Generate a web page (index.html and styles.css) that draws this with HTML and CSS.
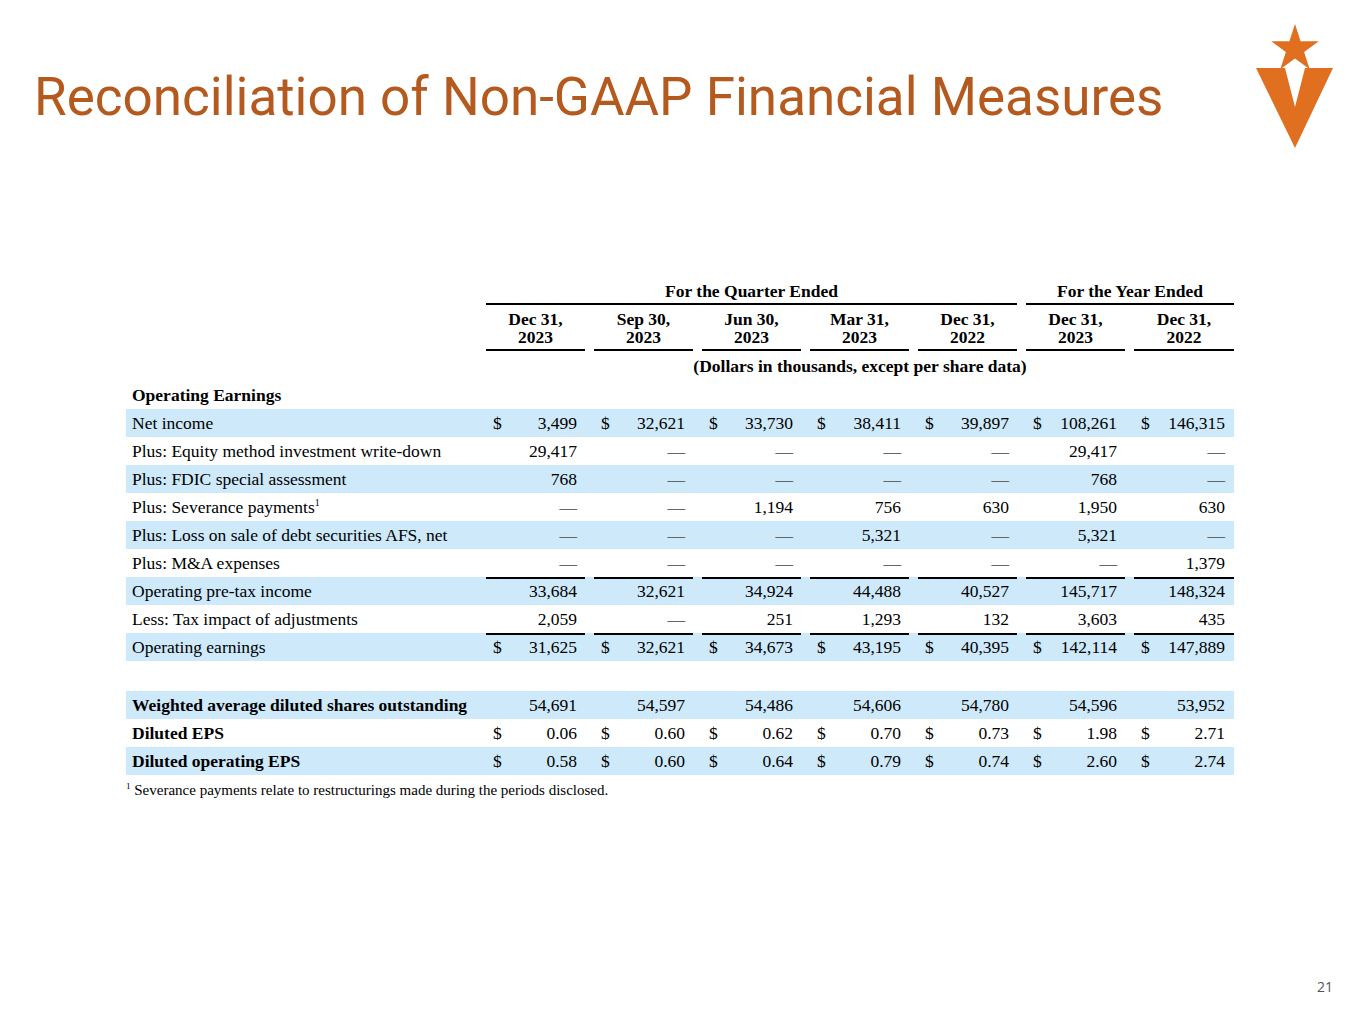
FILE: index.html
```html
<!DOCTYPE html>
<html lang="en">
<head>
<meta charset="utf-8">
<title>Reconciliation of Non-GAAP Financial Measures</title>
<link rel="stylesheet" href="styles.css">
</head>
<body>
<div class="page">
  <header class="header">
    <h1 class="title">Reconciliation of Non-GAAP Financial Measures</h1>
    <svg class="logo" width="80" height="128" viewBox="1257 21 80 128" aria-hidden="true">
      <polygon fill="#E0701F" points="1297,24 1302.6,41.3 1320.8,41.3 1306.1,52 1311.7,69.2 1297,58.5 1282.3,69.2 1287.9,52 1273.2,41.3 1291.4,41.3"/>
      <polygon fill="#E0701F" points="1258,68 1287,68 1297,107 1307,68 1335,68 1297,148"/>
    </svg>
  </header>

  <section class="table">
    <div class="row hdr-group">
      <div class="label"></div>
      <div class="span-q"><div class="in ul">For the Quarter Ended</div></div>
      <div class="span-y"><div class="in ul last">For the Year Ended</div></div>
    </div>
    <div class="row hdr-cols">
      <div class="label"></div>
      <div class="c"><div class="in ul">Dec 31,<br>2023</div></div>
      <div class="c"><div class="in ul">Sep 30,<br>2023</div></div>
      <div class="c"><div class="in ul">Jun 30,<br>2023</div></div>
      <div class="c"><div class="in ul">Mar 31,<br>2023</div></div>
      <div class="c"><div class="in ul">Dec 31,<br>2022</div></div>
      <div class="c"><div class="in ul">Dec 31,<br>2023</div></div>
      <div class="c"><div class="in ul last">Dec 31,<br>2022</div></div>
    </div>
    <div class="row hdr-units">
      <div class="label"></div>
      <div class="span-all">(Dollars in thousands, except per share data)</div>
    </div>
    <div class="row">
      <div class="label bold">Operating Earnings</div>
    </div>

    <div class="row band">
      <div class="label">Net income</div>
      <div class="c"><div class="in"><span>$</span><span>3,499</span></div></div>
      <div class="c"><div class="in"><span>$</span><span>32,621</span></div></div>
      <div class="c"><div class="in"><span>$</span><span>33,730</span></div></div>
      <div class="c"><div class="in"><span>$</span><span>38,411</span></div></div>
      <div class="c"><div class="in"><span>$</span><span>39,897</span></div></div>
      <div class="c"><div class="in"><span>$</span><span>108,261</span></div></div>
      <div class="c"><div class="in last"><span>$</span><span>146,315</span></div></div>
    </div>
    <div class="row">
      <div class="label">Plus: Equity method investment write-down</div>
      <div class="c"><div class="in"><span></span><span>29,417</span></div></div>
      <div class="c"><div class="in"><span></span><span class="dash">—</span></div></div>
      <div class="c"><div class="in"><span></span><span class="dash">—</span></div></div>
      <div class="c"><div class="in"><span></span><span class="dash">—</span></div></div>
      <div class="c"><div class="in"><span></span><span class="dash">—</span></div></div>
      <div class="c"><div class="in"><span></span><span>29,417</span></div></div>
      <div class="c"><div class="in last"><span></span><span class="dash">—</span></div></div>
    </div>
    <div class="row band">
      <div class="label">Plus: FDIC special assessment</div>
      <div class="c"><div class="in"><span></span><span>768</span></div></div>
      <div class="c"><div class="in"><span></span><span class="dash">—</span></div></div>
      <div class="c"><div class="in"><span></span><span class="dash">—</span></div></div>
      <div class="c"><div class="in"><span></span><span class="dash">—</span></div></div>
      <div class="c"><div class="in"><span></span><span class="dash">—</span></div></div>
      <div class="c"><div class="in"><span></span><span>768</span></div></div>
      <div class="c"><div class="in last"><span></span><span class="dash">—</span></div></div>
    </div>
    <div class="row">
      <div class="label">Plus: Severance payments<sup>1</sup></div>
      <div class="c"><div class="in"><span></span><span class="dash">—</span></div></div>
      <div class="c"><div class="in"><span></span><span class="dash">—</span></div></div>
      <div class="c"><div class="in"><span></span><span>1,194</span></div></div>
      <div class="c"><div class="in"><span></span><span>756</span></div></div>
      <div class="c"><div class="in"><span></span><span>630</span></div></div>
      <div class="c"><div class="in"><span></span><span>1,950</span></div></div>
      <div class="c"><div class="in last"><span></span><span>630</span></div></div>
    </div>
    <div class="row band">
      <div class="label">Plus: Loss on sale of debt securities AFS, net</div>
      <div class="c"><div class="in"><span></span><span class="dash">—</span></div></div>
      <div class="c"><div class="in"><span></span><span class="dash">—</span></div></div>
      <div class="c"><div class="in"><span></span><span class="dash">—</span></div></div>
      <div class="c"><div class="in"><span></span><span>5,321</span></div></div>
      <div class="c"><div class="in"><span></span><span class="dash">—</span></div></div>
      <div class="c"><div class="in"><span></span><span>5,321</span></div></div>
      <div class="c"><div class="in last"><span></span><span class="dash">—</span></div></div>
    </div>
    <div class="row">
      <div class="label">Plus: M&amp;A expenses</div>
      <div class="c"><div class="in ul"><span></span><span class="dash">—</span></div></div>
      <div class="c"><div class="in ul"><span></span><span class="dash">—</span></div></div>
      <div class="c"><div class="in ul"><span></span><span class="dash">—</span></div></div>
      <div class="c"><div class="in ul"><span></span><span class="dash">—</span></div></div>
      <div class="c"><div class="in ul"><span></span><span class="dash">—</span></div></div>
      <div class="c"><div class="in ul"><span></span><span class="dash">—</span></div></div>
      <div class="c"><div class="in ul last"><span></span><span>1,379</span></div></div>
    </div>
    <div class="row band">
      <div class="label">Operating pre-tax income</div>
      <div class="c"><div class="in"><span></span><span>33,684</span></div></div>
      <div class="c"><div class="in"><span></span><span>32,621</span></div></div>
      <div class="c"><div class="in"><span></span><span>34,924</span></div></div>
      <div class="c"><div class="in"><span></span><span>44,488</span></div></div>
      <div class="c"><div class="in"><span></span><span>40,527</span></div></div>
      <div class="c"><div class="in"><span></span><span>145,717</span></div></div>
      <div class="c"><div class="in last"><span></span><span>148,324</span></div></div>
    </div>
    <div class="row">
      <div class="label">Less: Tax impact of adjustments</div>
      <div class="c"><div class="in ul"><span></span><span>2,059</span></div></div>
      <div class="c"><div class="in ul"><span></span><span class="dash">—</span></div></div>
      <div class="c"><div class="in ul"><span></span><span>251</span></div></div>
      <div class="c"><div class="in ul"><span></span><span>1,293</span></div></div>
      <div class="c"><div class="in ul"><span></span><span>132</span></div></div>
      <div class="c"><div class="in ul"><span></span><span>3,603</span></div></div>
      <div class="c"><div class="in ul last"><span></span><span>435</span></div></div>
    </div>
    <div class="row band">
      <div class="label">Operating earnings</div>
      <div class="c"><div class="in"><span>$</span><span>31,625</span></div></div>
      <div class="c"><div class="in"><span>$</span><span>32,621</span></div></div>
      <div class="c"><div class="in"><span>$</span><span>34,673</span></div></div>
      <div class="c"><div class="in"><span>$</span><span>43,195</span></div></div>
      <div class="c"><div class="in"><span>$</span><span>40,395</span></div></div>
      <div class="c"><div class="in"><span>$</span><span>142,114</span></div></div>
      <div class="c"><div class="in last"><span>$</span><span>147,889</span></div></div>
    </div>

    <div class="row band gap-before">
      <div class="label bold">Weighted average diluted shares outstanding</div>
      <div class="c"><div class="in"><span></span><span>54,691</span></div></div>
      <div class="c"><div class="in"><span></span><span>54,597</span></div></div>
      <div class="c"><div class="in"><span></span><span>54,486</span></div></div>
      <div class="c"><div class="in"><span></span><span>54,606</span></div></div>
      <div class="c"><div class="in"><span></span><span>54,780</span></div></div>
      <div class="c"><div class="in"><span></span><span>54,596</span></div></div>
      <div class="c"><div class="in last"><span></span><span>53,952</span></div></div>
    </div>
    <div class="row">
      <div class="label bold">Diluted EPS</div>
      <div class="c"><div class="in"><span>$</span><span>0.06</span></div></div>
      <div class="c"><div class="in"><span>$</span><span>0.60</span></div></div>
      <div class="c"><div class="in"><span>$</span><span>0.62</span></div></div>
      <div class="c"><div class="in"><span>$</span><span>0.70</span></div></div>
      <div class="c"><div class="in"><span>$</span><span>0.73</span></div></div>
      <div class="c"><div class="in"><span>$</span><span>1.98</span></div></div>
      <div class="c"><div class="in last"><span>$</span><span>2.71</span></div></div>
    </div>
    <div class="row band">
      <div class="label bold">Diluted operating EPS</div>
      <div class="c"><div class="in"><span>$</span><span>0.58</span></div></div>
      <div class="c"><div class="in"><span>$</span><span>0.60</span></div></div>
      <div class="c"><div class="in"><span>$</span><span>0.64</span></div></div>
      <div class="c"><div class="in"><span>$</span><span>0.79</span></div></div>
      <div class="c"><div class="in"><span>$</span><span>0.74</span></div></div>
      <div class="c"><div class="in"><span>$</span><span>2.60</span></div></div>
      <div class="c"><div class="in last"><span>$</span><span>2.74</span></div></div>
    </div>
    <p class="footnote"><sup>1</sup> Severance payments relate to restructurings made during the periods disclosed.</p>
  </section>

  <footer class="footer">21</footer>
</div>
</body>
</html>
```

FILE: styles.css
```css
* { box-sizing: border-box; }

html, body {
  margin: 0;
  padding: 0;
  background: #ffffff;
}

.page {
  width: 1365px;
  height: 1024px;
  display: flex;
  flex-direction: column;
}

.header {
  display: flex;
  justify-content: space-between;
  align-items: flex-start;
  padding: 21px 30px 0 34px;
  height: 279px;
}

.title {
  margin: 44px 0 0 0;
  font-family: Roboto, "Open Sans", sans-serif;
  font-weight: 400;
  font-size: 53px;
  line-height: 64px;
  color: #B45A1E;
  letter-spacing: 0;
}

.logo {
  display: block;
  flex: none;
}

.table {
  margin-left: 126px;
  width: 1108px;
  font-family: "Liberation Serif", "Times New Roman", serif;
  font-size: 17.5px;
  color: #000;
}

.row {
  display: grid;
  grid-template-columns: 360px repeat(6, 108px) 100px;
  height: 28px;
  line-height: 28px;
}

.band {
  background: #CDE9FA;
}

.gap-before {
  margin-top: 30px;
}

.label {
  padding-left: 6px;
  white-space: nowrap;
}

.label sup {
  font-size: 10px;
  line-height: 0;
  vertical-align: 7px;
}

.bold {
  font-weight: 700;
}

.c {
  min-width: 0;
}

.in {
  display: flex;
  justify-content: space-between;
  height: 100%;
  margin-right: 9px;
  padding: 0 8px 0 7px;
  white-space: nowrap;
}

.in.last {
  margin-right: 0;
  padding-right: 9px;
}

.in.ul {
  border-bottom: 2px solid #000;
}

.dash {
  color: #666;
}

/* header rows */
.hdr-group {
  height: 26px;
  line-height: 24px;
  font-weight: 700;
}

.span-q { grid-column: 2 / 7; }
.span-y { grid-column: 7 / 9; }

.hdr-group .in,
.hdr-cols .in {
  display: block;
  text-align: center;
  padding: 0;
}

.hdr-cols {
  height: 46px;
  line-height: 17.5px;
  font-weight: 700;
}

.hdr-cols .in {
  padding: 6px 0 3px;
}

.hdr-units {
  height: 30px;
  line-height: 30px;
  font-weight: 700;
}

.span-all {
  grid-column: 2 / 9;
  text-align: center;
}

.footnote {
  margin: 5px 0 0 0;
  font-size: 15px;
  line-height: 20px;
  white-space: nowrap;
}

.footnote sup {
  font-size: 9px;
  line-height: 0;
  vertical-align: 6px;
}

.footer {
  margin-top: auto;
  padding: 0 32px 27px 0;
  text-align: right;
  font-family: "Open Sans", sans-serif;
  font-size: 14px;
  line-height: 20px;
  color: #555;
}
```
